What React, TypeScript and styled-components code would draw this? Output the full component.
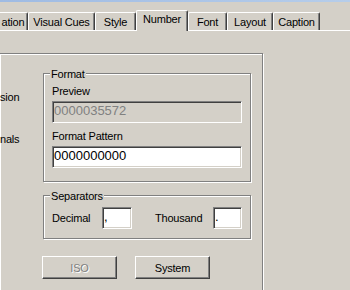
import React from 'react';
import styled, { createGlobalStyle } from 'styled-components';

const Global = createGlobalStyle`
  body {
    margin: 0;
    background: #d4d0c8;
    font-family: "Liberation Sans", Arial, sans-serif;
    font-size: 11px;
    letter-spacing: -0.2px;
    color: #000;
  }
`;

const Window = styled.div`
  width: 350px;
  height: 290px;
  overflow: hidden;
  background: #d4d0c8;
`;

const TitleEdge = styled.div`
  height: 2px;
  background: linear-gradient(90deg, #9fbbe3, #b6cdea);
`;

const TabRow = styled.div`
  display: flex;
  align-items: flex-end;
  height: 28px;
  border-bottom: 1px solid #fff;
`;

const Tab = styled.div<{ $w: number; $active?: boolean; $shift?: number }>`
  position: relative;
  z-index: ${p => (p.$active ? 1 : 0)};
  box-sizing: border-box;
  flex: none;
  width: ${p => p.$w}px;
  height: ${p => (p.$active ? 21 : 18)}px;
  margin-left: ${p => p.$shift ?? 0}px;
  margin-bottom: ${p => (p.$active ? -1 : 0)}px;
  padding-top: ${p => (p.$active ? 2 : 3)}px;
  background: #d4d0c8;
  border-top: 1px solid #fff;
  border-left: 1px solid #fff;
  border-right: 1px solid #404040;
  border-radius: 2px 2px 0 0;
  box-shadow: inset -1px 0 #808080;
  line-height: 13px;
  text-align: center;
  white-space: nowrap;
`;

const Frame = styled.div`
  box-sizing: border-box;
  display: grid;
  grid-template-columns: 43px 1fr;
  width: 264px;
  height: 270px;
  margin: 22px 0 0 -1px;
  padding-top: 19px;
  border: 1px solid #808080;
  box-shadow: inset 1px 1px #fff, 1px 1px #fff;
`;

const SideLabels = styled.div`
  display: flex;
  flex-direction: column;
  align-items: flex-start;
`;

const Label = styled.div<{ $top?: number; $left?: number; $w?: number }>`
  flex: none;
  margin-top: ${p => p.$top ?? 0}px;
  margin-left: ${p => p.$left ?? 0}px;
  width: ${p => (p.$w ? `${p.$w}px` : 'auto')};
  line-height: 13px;
  white-space: nowrap;
`;

const Column = styled.div`
  display: flex;
  flex-direction: column;
  align-items: flex-start;
`;

const Group = styled.div<{ $h: number; $top?: number }>`
  position: relative;
  box-sizing: border-box;
  width: 208px;
  height: ${p => p.$h}px;
  margin-top: ${p => p.$top ?? 0}px;
  padding: 11px 0 0 8px;
  border: 1px solid #808080;
  box-shadow: inset 1px 1px #fff, 1px 1px #fff;
`;

const Legend = styled.span`
  position: absolute;
  top: -6px;
  left: 6px;
  padding: 0 1px;
  background: #d4d0c8;
  line-height: 13px;
`;

const TextBox = styled.div<{ $w: number; $top?: number; $disabled?: boolean }>`
  box-sizing: border-box;
  flex: none;
  width: ${p => p.$w}px;
  height: 22px;
  margin-top: ${p => p.$top ?? 0}px;
  padding-left: 1px;
  border: 1px solid;
  border-color: #808080 #fff #fff #808080;
  box-shadow: inset 1px 1px #404040, inset -1px -1px #d4d0c8;
  background: ${p => (p.$disabled ? '#d4d0c8' : '#fff')};
  color: ${p => (p.$disabled ? '#808080' : '#000')};
  font-size: 13px;
  letter-spacing: 0;
  line-height: 18px;
  white-space: nowrap;
`;

const SepRow = styled.div`
  display: flex;
  align-items: center;
  height: 22px;
`;

const ButtonRow = styled.div`
  display: flex;
  gap: 18px;
  margin: 17px 0 0 -1px;
`;

const Button = styled.button`
  box-sizing: border-box;
  width: 75px;
  height: 23px;
  padding: 0;
  background: #d4d0c8;
  border: 1px solid;
  border-color: #fff #404040 #404040 #fff;
  box-shadow: inset -1px -1px #808080;
  font-family: "Liberation Sans", Arial, sans-serif;
  font-size: 11px;
  letter-spacing: -0.2px;
  color: #000;

  &:disabled {
    color: #808080;
    text-shadow: 1px 1px #fff;
  }
`;

const tabs = [
  { label: 'ation', w: 30, shift: -2 },
  { label: 'Visual Cues', w: 67 },
  { label: 'Style', w: 41 },
  { label: 'Number', w: 52, active: true },
  { label: 'Font', w: 39 },
  { label: 'Layout', w: 46 },
  { label: 'Caption', w: 47 },
];

export default function App() {
  return (
    <Window>
      <Global />
      <TitleEdge />
      <TabRow>
        {tabs.map(t => (
          <Tab key={t.label} $w={t.w} $active={t.active} $shift={t.shift}>
            {t.label}
          </Tab>
        ))}
      </TabRow>
      <Frame>
        <SideLabels>
          <Label $top={18}>sion</Label>
          <Label $top={29}>nals</Label>
        </SideLabels>
        <Column>
          <Group $h={109}>
            <Legend>Format</Legend>
            <Label>Preview</Label>
            <TextBox $w={190} $top={3} $disabled>0000035572</TextBox>
            <Label $top={7}>Format Pattern</Label>
            <TextBox $w={190} $top={3}>0000000000</TextBox>
          </Group>
          <Group $h={44} $top={13}>
            <Legend>Separators</Legend>
            <SepRow>
              <Label $w={50}>Decimal</Label>
              <TextBox $w={30}>,</TextBox>
              <Label $w={58} $left={23}>Thousand</Label>
              <TextBox $w={29}>.</TextBox>
            </SepRow>
          </Group>
          <ButtonRow>
            <Button disabled>ISO</Button>
            <Button>System</Button>
          </ButtonRow>
        </Column>
      </Frame>
    </Window>
  );
}
